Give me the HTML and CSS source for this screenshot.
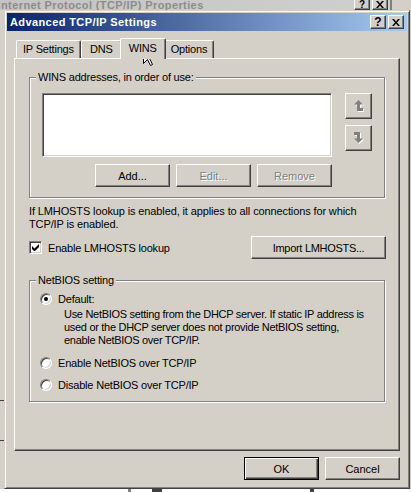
FILE: index.html
```html
<!DOCTYPE html>
<html>
<head lang="en">
    <meta charset="UTF-8">
    <title>Advanced TCP/IP Settings</title>
    <link rel="stylesheet" href="styles.css">
</head>
<body>
<div class="back-title">
    <span class="back-caption">nternet Protocol (TCP/IP) Properties</span>
    <span class="cap-btns">
        <span class="cap-btn">?</span>
        <span class="cap-btn"><svg width="8" height="7" viewBox="0 0 8 7"><path d="M0 0h2l2 2.5L6 0h2L5 3.5 8 7H6L4 4.5 2 7H0l3-3.5z"/></svg></span>
    </span>
</div>
<div class="back-left"></div>
<div class="back-bottom"><span class="mark m1"></span><span class="mark m2"></span><span class="mark m3"></span></div>

<div class="dialog">
    <div class="titlebar">
        <span class="title">Advanced TCP/IP Settings</span>
        <span class="cap-btns">
            <span class="cap-btn">?</span>
            <span class="cap-btn"><svg width="8" height="7" viewBox="0 0 8 7"><path d="M0 0h2l2 2.5L6 0h2L5 3.5 8 7H6L4 4.5 2 7H0l3-3.5z"/></svg></span>
        </span>
    </div>
    <div class="client">
        <div class="tabs">
            <div class="tab">IP Settings</div>
            <div class="tab">DNS</div>
            <div class="tab active">WINS</div>
            <div class="tab">Options</div>
        </div>
        <div class="panel">
            <fieldset class="group wins">
                <legend>WINS addresses, in order of use:</legend>
                <div class="list-row">
                    <div class="listbox"></div>
                    <div class="arrows">
                        <button class="btn arrow-btn" disabled>
                            <svg width="10" height="12" viewBox="0 0 10 12">
                                <path class="hi" transform="translate(1 1)" d="M4.5 0L9 4.5H6V8h3v3H3V4.5H0z"/>
                                <path class="sh" d="M4.5 0L9 4.5H6V8h3v3H3V4.5H0z"/>
                            </svg>
                        </button>
                        <button class="btn arrow-btn" disabled>
                            <svg width="10" height="12" viewBox="0 0 10 12">
                                <path class="hi" transform="translate(1 1)" d="M0 0h6v6.5h3L4.5 11 0 6.5h3V3H0z"/>
                                <path class="sh" d="M0 0h6v6.5h3L4.5 11 0 6.5h3V3H0z"/>
                            </svg>
                        </button>
                    </div>
                </div>
                <div class="btn-row">
                    <button class="btn">Add...</button>
                    <button class="btn" disabled>Edit...</button>
                    <button class="btn" disabled>Remove</button>
                </div>
            </fieldset>

            <p class="note">If LMHOSTS lookup is enabled, it applies to all connections for which<br>TCP/IP is enabled.</p>

            <div class="lm-row">
                <label class="check">
                    <span class="checkbox"><svg width="7" height="7" viewBox="0 0 7 7"><path d="M0 2v3l2 2h1l4-4V0L2.5 4.5z"/></svg></span>
                    Enable LMHOSTS lookup
                </label>
                <button class="btn import">Import LMHOSTS...</button>
            </div>

            <fieldset class="group netbios">
                <legend>NetBIOS setting</legend>
                <div class="radio-row"><span class="radio on"></span>Default:</div>
                <p class="desc">Use NetBIOS setting from the DHCP server. If static IP address is<br>used or the DHCP server does not provide NetBIOS setting,<br>enable NetBIOS over TCP/IP.</p>
                <div class="radio-row"><span class="radio"></span>Enable NetBIOS over TCP/IP</div>
                <div class="radio-row"><span class="radio"></span>Disable NetBIOS over TCP/IP</div>
            </fieldset>
        </div>
        <div class="footer">
            <button class="btn default">OK</button>
            <button class="btn">Cancel</button>
        </div>
    </div>
</div>

<svg class="cursor" width="13" height="20" viewBox="0 0 13 20">
    <path d="M0.5 0.5V16.5L4.5 12.5L7.5 18.5L9.5 17.5L6.5 11.5H11.5Z" fill="#fff" stroke="#000"/>
</svg>
</body>
</html>
```

FILE: styles.css
```css
* {
    margin: 0;
    padding: 0;
    box-sizing: border-box;
}
body {
    width: 411px;
    height: 492px;
    overflow: hidden;
    position: relative;
    background: #d4d0c8;
    font: 11px "Liberation Sans", Arial, sans-serif;
    letter-spacing: -0.2px;
    color: #000;
}

/* window behind */
.back-title {
    width: 392px;
    height: 10px;
    display: flex;
    justify-content: space-between;
    align-items: flex-end;
    padding-right: 2px;
    background: linear-gradient(to right, #c4c4c4, #cfcfcf);
    border-right: 2px solid #808080;
    overflow: hidden;
}
.back-caption {
    color: #8c8c8c;
    font-weight: bold;
    letter-spacing: 0.4px;
    line-height: 13px;
    margin-bottom: -2px;
    margin-left: 1px;
}
.back-title .cap-btn {
    height: 10px;
    border-top: none;
    font-size: 10px;
    line-height: 9px;
}
.back-left {
    position: absolute;
    left: 0;
    top: 400px;
    width: 4px;
    height: 41px;
    border-top: 1px solid #404040;
    border-bottom: 1px solid #404040;
}
.back-bottom {
    position: absolute;
    left: 0;
    top: 489px;
    width: 411px;
    height: 3px;
    background: #fff;
}
.mark {
    position: absolute;
    top: 0;
    height: 3px;
    background: #404040;
}
.m1 { left: 128px; width: 3px; background: #808080; }
.m2 { left: 152px; width: 10px; }
.m3 { left: 310px; width: 4px; }

/* dialog */
.dialog {
    position: absolute;
    left: 4px;
    top: 10px;
    width: 406px;
    height: 479px;
    padding: 2px;
    border: 1px solid;
    border-color: #d4d0c8 #404040 #404040 #d4d0c8;
    box-shadow: inset 1px 1px #fff, inset -1px -1px #808080;
}
.titlebar {
    height: 18px;
    display: flex;
    justify-content: space-between;
    align-items: center;
    padding: 0 3px;
    background: linear-gradient(to right, #0a246a, #a6caf0);
}
.title {
    color: #fff;
    font-weight: bold;
    letter-spacing: 0.4px;
}
.cap-btns {
    display: flex;
    gap: 2px;
}
.cap-btn {
    width: 16px;
    height: 14px;
    display: flex;
    align-items: center;
    justify-content: center;
    background: #d4d0c8;
    border: 1px solid;
    border-color: #fff #404040 #404040 #fff;
    box-shadow: inset -1px -1px #808080;
    font-weight: bold;
    font-size: 12px;
    line-height: 12px;
    letter-spacing: 0;
}
.client {
    display: flex;
    flex-direction: column;
    padding: 7px 7px 6px;
}

/* tabs */
.tabs {
    display: flex;
    align-items: flex-end;
    height: 20px;
    padding-left: 2px;
}
.tab {
    height: 18px;
    min-width: 41px;
    padding: 0 6px;
    text-align: center;
    line-height: 17px;
    border: 1px solid #fff;
    border-bottom: none;
    border-right-color: #404040;
    border-radius: 2px 2px 0 0;
    box-shadow: inset -1px 0 #808080;
}
.tab.active {
    height: 21px;
    margin: 0 -2px -1px;
    padding: 0 8px;
    line-height: 18px;
    position: relative;
    z-index: 1;
    background: #d4d0c8;
}
.panel {
    height: 393px;
    padding: 12px 14px 0;
    border: 1px solid;
    border-color: #fff #404040 #404040 #fff;
    box-shadow: inset -1px -1px #808080;
}

/* group boxes */
.group {
    min-width: 0;
    border: 1px solid #808080;
    box-shadow: 1px 1px #fff, inset 1px 1px #fff;
    padding: 9px 12px 10px;
}
.group legend {
    margin-left: -6px;
    padding: 0 2px;
    line-height: 13px;
    background: #d4d0c8;
}
.list-row {
    display: flex;
    gap: 13px;
}
.listbox {
    width: 290px;
    height: 64px;
    background: #fff;
    border: 1px solid;
    border-color: #808080 #fff #fff #808080;
    box-shadow: inset 1px 1px #404040, inset -1px -1px #d4d0c8;
}
.arrows {
    display: flex;
    flex-direction: column;
    gap: 6px;
}
.btn {
    width: 75px;
    height: 23px;
    display: flex;
    align-items: center;
    justify-content: center;
    font: inherit;
    color: #000;
    background: #d4d0c8;
    border: 1px solid;
    border-color: #fff #404040 #404040 #fff;
    box-shadow: inset -1px -1px #808080;
    appearance: none;
}
.btn:disabled {
    color: #808080;
    text-shadow: 1px 1px #fff;
}
.btn.arrow-btn {
    width: 27px;
    height: 26px;
}
.arrow-btn .hi { fill: #fff; }
.arrow-btn .sh { fill: #808080; }
.btn-row {
    display: flex;
    justify-content: flex-end;
    gap: 6px;
    margin: 7px 40px 0 0;
}
.btn.default {
    border-color: #000;
    box-shadow: inset 1px 1px #fff, inset -1px -1px #404040, inset -2px -2px #808080;
}

/* lmhosts */
.note {
    margin-top: 7px;
    line-height: 13px;
    letter-spacing: -0.12px;
    white-space: nowrap;
}
.lm-row {
    display: flex;
    justify-content: space-between;
    align-items: center;
    margin: 5px -1px 0 0;
}
.check {
    display: flex;
    align-items: center;
    gap: 6px;
}
.checkbox {
    width: 13px;
    height: 13px;
    display: flex;
    align-items: center;
    justify-content: center;
    background: #fff;
    border: 1px solid;
    border-color: #808080 #fff #fff #808080;
    box-shadow: inset 1px 1px #404040, inset -1px -1px #d4d0c8;
}
.btn.import {
    width: 135px;
    letter-spacing: -0.3px;
}

/* netbios */
.group.netbios {
    margin-top: 15px;
    padding: 5px 10px 10px;
}
.group.netbios legend {
    margin-left: -4px;
}
.radio-row {
    display: flex;
    align-items: center;
    gap: 6px;
    height: 13px;
}
.radio {
    width: 12px;
    height: 12px;
    display: flex;
    align-items: center;
    justify-content: center;
    border-radius: 50%;
    background: #fff;
    border: 1px solid;
    border-color: #808080 #fff #fff #808080;
    box-shadow: inset 1px 1px #404040, inset -1px -1px #d4d0c8;
}
.radio.on::after {
    content: "";
    width: 4px;
    height: 4px;
    border-radius: 50%;
    background: #000;
}
.desc {
    margin: 3px 0 0 24px;
    line-height: 13px;
    letter-spacing: -0.3px;
    white-space: nowrap;
}
.desc + .radio-row,
.radio-row + .radio-row {
    margin-top: 9px;
}

.footer {
    display: flex;
    justify-content: flex-end;
    gap: 6px;
    margin-top: 6px;
}

.cursor {
    position: absolute;
    left: 143px;
    top: 47px;
}
```
